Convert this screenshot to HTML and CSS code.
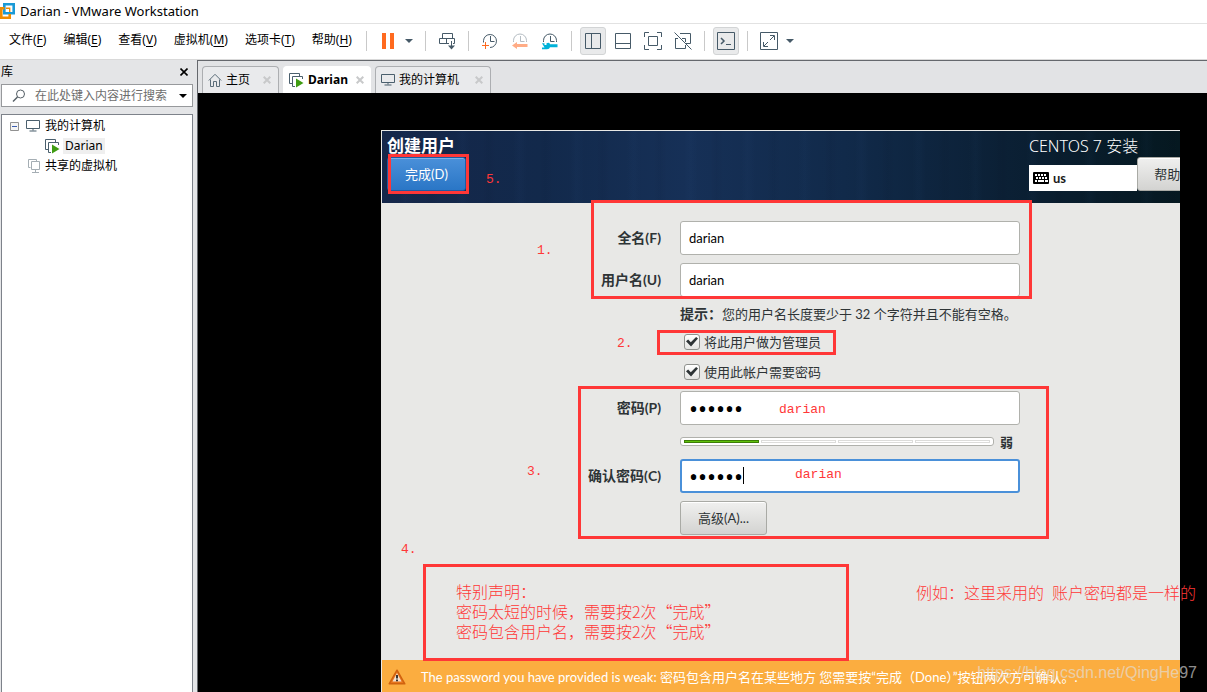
FILE: index.html
```
<!DOCTYPE html>
<html lang="zh-CN">
<head>
<meta charset="utf-8">
<title>Darian - VMware Workstation</title>
<link rel="stylesheet" href="styles.css">
</head>
<body>
<svg class="defs" aria-hidden="true">
  <symbol id="monitor" viewBox="0 0 14 12"><path d="M.5.5h13v8H.5zM7 8.500v2M3.500 11h7" fill="none" stroke="currentColor"/></symbol>
  <symbol id="vm-on" viewBox="0 0 15 15"><path d="M3 10.500H.5V.5h10V3M13.500 6V3.500h-10v10H6" fill="none" stroke="#4a5f6d"/><path d="M7 5.500l7.500 4.500L7 14.500z" fill="#3f9c12"/></symbol>
  <symbol id="caret" viewBox="0 0 8 4"><path d="M0 0h8L4 4z" fill="currentColor"/></symbol>
  <symbol id="close" viewBox="0 0 8 8"><path d="M.7.7l6.600 6.600M7.300.7L.7 7.300" fill="none" stroke="currentColor" stroke-width="2"/></symbol>
</svg>

<header class="titlebar">
  <svg class="logo" width="15" height="22" viewBox="0 0 15 22" fill="none"><path d="M4.300 4.300h9.400v9H4.300z" stroke="#1a9ad6" stroke-width="2.600"/><path d="M4.500 8.300H1.300v9.400h8.400V14" stroke="#f08c00" stroke-width="2.600"/><path d="M6 8.300h3.700V12" stroke="#f08c00" stroke-width="1.400"/></svg>
  <h1>Darian - VMware Workstation</h1>
</header>

<div class="menubar">
  <nav class="menus">
    <button>文件(<u>F</u>)</button>
    <button>编辑(<u>E</u>)</button>
    <button>查看(<u>V</u>)</button>
    <button>虚拟机(<u>M</u>)</button>
    <button>选项卡(<u>T</u>)</button>
    <button>帮助(<u>H</u>)</button>
  </nav>
  <div class="group power">
    <button aria-label="挂起"><svg width="14" height="16" viewBox="0 0 14 16"><path d="M1 0h4v16H1zM9 0h4v16H9z" fill="#ff6a1f"/></svg></button>
    <button aria-label="电源选项"><svg width="8" height="4"><use href="#caret"/></svg></button>
  </div>
  <div class="group send">
    <button aria-label="发送按键"><svg width="20" height="20" viewBox="0 0 20 20" fill="none" stroke="#465a68"><path d="M4.500 2.500h10v5h-10zM11 12.500H1.500v-5h15v5H15M8.500 7.500v5M13.500 10v6"/><path d="M10 14.500h7l-3.500 4z" fill="#465a68" stroke="none"/></svg></button>
  </div>
  <div class="group snap">
    <button aria-label="拍摄快照"><svg width="20" height="20" viewBox="0 0 20 20" fill="none" stroke="#465a68"><path d="M3.500 11.500v-2A6.500 6.500 0 1 1 10 16.500M10.500 5v5.500h4"/><path d="M2 14.500h7M5.500 11v7" stroke="#ff6a1f"/></svg></button>
    <button aria-label="恢复快照"><svg width="20" height="20" viewBox="0 0 20 20" fill="none" stroke="#b5bdc3"><path d="M3.500 11v-1.500a6.500 6.500 0 0 1 13 0V11M10.500 5v5.500h4"/><path d="M2 14.500L7 11v2h10.500v3H7v2z" fill="#ffac86" stroke="none"/></svg></button>
    <button aria-label="管理快照"><svg width="20" height="20" viewBox="0 0 20 20" fill="none" stroke="#465a68"><path d="M3.500 11v-1.500a6.500 6.500 0 0 1 13 0V11M10.500 5v5.500h4"/><path d="M2 12.200h2.500V14h2v-1.800q3-1 3.500 1h7.500v3H10q-.5 2-3 2H2v-1.600h2.500z" fill="#00b2d9" stroke="none"/></svg></button>
  </div>
  <div class="group view">
    <button class="pressed" aria-label="显示库"><svg width="18" height="18" viewBox="0 0 18 18" fill="none" stroke="#465a68"><path d="M1.500 1.500h15v15h-15zM7.500 1.500v15"/></svg></button>
    <button aria-label="缩略图栏"><svg width="18" height="18" viewBox="0 0 18 18" fill="none" stroke="#465a68"><path d="M1.500 1.500h15v15h-15zM1.500 11.500h15"/></svg></button>
    <button aria-label="全屏"><svg width="18" height="18" viewBox="0 0 18 18" fill="none" stroke="#465a68"><path d="M4.500 4.500h9v9h-9zM.5 5V.5H5M13 .5h4.500V5M17.500 13v4.500H13M5 17.500H.5V13"/></svg></button>
    <button aria-label="Unity"><svg width="18" height="18" viewBox="0 0 18 18" fill="none" stroke="#465a68"><path d="M6 1.500h10.500v10H12M1.500 6v10.500h10V13M1.500 6.500H4M11.500 10V6.500H8M.5.5l17 17"/></svg></button>
  </div>
  <div class="group console">
    <button class="pressed" aria-label="控制台"><svg width="18" height="18" viewBox="0 0 18 18" fill="none" stroke="#465a68"><path d="M.5.5h17v17H.5z"/><path d="M4 6l3 3-3 3" stroke-width="1.500"/><path d="M9 12.500h5"/></svg></button>
  </div>
  <div class="group stretch">
    <button aria-label="拉伸"><svg width="18" height="18" viewBox="0 0 18 18" fill="none" stroke="#465a68"><path d="M.5.5h17v17H.5zM10 3.500h4.500V8M8 14.500H3.500V10M14 4l-4 4M4 14l4-4"/></svg></button>
    <button aria-label="拉伸选项"><svg width="8" height="4"><use href="#caret"/></svg></button>
  </div>
</div>

<div class="workspace">
  <aside class="library">
    <div class="library-head"><h2>库</h2><button aria-label="关闭库"><svg width="8" height="8" viewBox="0 0 8 8"><path d="M.5.5l7 7M7.500.5l-7 7" stroke="#000" stroke-width="1.600"/></svg></button></div>
    <div class="search">
      <svg width="14" height="14" viewBox="0 0 14 14" fill="none" stroke="#555f66"><circle cx="8.500" cy="5" r="4"/><path d="M5.500 8L1 12.500" stroke-width="1.400"/></svg>
      <input type="text" aria-label="搜索" placeholder="在此处键入内容进行搜索">
      <button aria-label="搜索选项"><svg width="8" height="4"><use href="#caret"/></svg></button>
    </div>
    <ul class="tree">
      <li><svg class="expander" width="9" height="9" viewBox="0 0 9 9"><path d="M.5.5h8v8h-8z" fill="#f4f4f4" stroke="#919191"/><path d="M2 4.500h5" stroke="#3c5eb0"/></svg><svg class="ic-monitor" width="14" height="12"><use href="#monitor"/></svg><span>我的计算机</span></li>
      <li class="child"><svg width="15" height="15"><use href="#vm-on"/></svg><span class="selected">Darian</span></li>
      <li class="shared"><svg width="12" height="14" viewBox="0 0 12 14" fill="none" stroke="#a5aeb4"><path d="M2.500 8.500h-2v-8h8v2M3.500 2.500h8v8h-8zM7.500 10.500v3M4 13.500h7"/></svg><span>共享的虚拟机</span></li>
    </ul>
  </aside>

  <main class="main">
    <div class="tabs" role="tablist">
      <div class="tab" role="tab"><svg class="home" width="14" height="14" viewBox="0 0 14 14" fill="none" stroke="#5b6d79"><path d="M.8 7.500L7 1.300l6.200 6.200M2.500 6.500v7h3v-5h3v5h3v-7"/></svg><span>主页</span><button aria-label="关闭"><svg width="8" height="8"><use href="#close"/></svg></button></div>
      <div class="tab active" role="tab" aria-selected="true"><svg width="15" height="15"><use href="#vm-on"/></svg><span>Darian</span><button aria-label="关闭"><svg width="8" height="8"><use href="#close"/></svg></button></div>
      <div class="tab wide" role="tab"><svg class="ic-monitor" width="14" height="12"><use href="#monitor"/></svg><span>我的计算机</span><button aria-label="关闭"><svg width="8" height="8"><use href="#close"/></svg></button></div>
    </div>

    <div class="stage">
      <section class="guest">
        <header class="guest-head">
          <div class="head-left">
            <h2>创建用户</h2>
            <button class="done">完成(D)</button>
          </div>
          <div class="head-right">
            <p>CENTOS 7 安装</p>
            <div class="head-tools">
              <div class="keyboard"><svg width="16" height="12" viewBox="0 0 16 12"><rect width="16" height="12" rx="1" fill="#000"/><path d="M2 3h12" stroke="#fff" stroke-width="2" stroke-dasharray="2 1"/><path d="M3 6h11" stroke="#fff" stroke-width="2" stroke-dasharray="2 1"/><path d="M2 9h2M5 9h6M12 9h3" stroke="#fff" stroke-width="2"/></svg><span>us</span></div>
              <button class="btn help">帮助!</button>
            </div>
          </div>
        </header>
        <form class="form">
          <label for="full">全名(F)</label><input id="full" type="text" value="darian">
          <label for="user">用户名(U)</label><input id="user" type="text" value="darian">
          <p class="hint"><b>提示<span class="colon">：</span></b>您的用户名长度要少于 32 个字符并且不能有空格。</p>
          <label class="check"><input type="checkbox" checked><span>将此用户做为管理员</span></label>
          <label class="check"><input type="checkbox" checked><span>使用此帐户需要密码</span></label>
          <label for="pass">密码(P)</label><input id="pass" type="password" value="darian">
          <div class="strength"><div class="meter"><i class="on"></i><i></i><i></i><i></i></div><b>弱</b></div>
          <label for="confirm">确认密码(C)</label><div class="confirm"><input id="confirm" type="password" value="darian"><i class="cursor"></i></div>
          <button type="button" class="btn advanced">高级(A)...</button>
        </form>
        <footer class="warning">
          <svg width="18" height="16" viewBox="0 0 18 16"><path d="M9 1.200L16.800 14.800H1.200z" fill="#e8761c" stroke="#d0620f" stroke-width="1.500" stroke-linejoin="round"/><path d="M9 4l4.500 8.500h-9z" fill="#f5e2cf"/><path d="M9 6v3.500M9 10.500v1.800" stroke="#222" stroke-width="1.800"/></svg>
          <p>The password you have provided is weak: 密码包含用户名在某些地方 您需要按“完成（Done）”按钮两次方可确认。.</p>
        </footer>
      </section>

      <div class="notes">
        <div class="box box-done"></div>
        <div class="box box-names"></div>
        <div class="box box-admin"></div>
        <div class="box box-pass"></div>
        <div class="box box-notice"></div>
        <span class="note n1">1.</span>
        <span class="note n2">2.</span>
        <span class="note n3">3.</span>
        <span class="note n4">4.</span>
        <span class="note n5">5.</span>
        <span class="note pw1">darian</span>
        <span class="note pw2">darian</span>
        <p class="note notice">特别声明：<br>密码太短的时候，需要按2次“完成”<br>密码包含用户名，需要按2次“完成”</p>
        <p class="note example">例如：这里采用的&ensp;账户密码都是一样的</p>
        <span class="watermark">https://blog.csdn.net/QingHe97</span>
      </div>
    </div>
  </main>
</div>
</body>
</html>
```
FILE: styles.css
```
* { box-sizing: border-box; }
body {
  margin: 0;
  min-height: 100vh;
  display: flex;
  flex-direction: column;
  background: #fff;
  color: #000;
  font: 12px/16px "Noto Sans", "Noto Sans CJK SC", sans-serif;
  overflow: hidden;
}
h1, h2, p, ul { margin: 0; padding: 0; font: inherit; list-style: none; }
button { font: inherit; color: inherit; background: none; border: 0; padding: 0; margin: 0; display: flex; align-items: center; justify-content: center; }
svg { display: block; flex: none; }
.defs { position: absolute; width: 0; height: 0; }

.titlebar { height: 24px; display: flex; align-items: center; gap: 5px; padding-bottom: 1px; border-bottom: 1px solid #e2e2e2; }
.titlebar h1 { font-size: 13px; }

.menubar { height: 36px; display: flex; align-items: center; padding-bottom: 1px; border-bottom: 1px solid #d9d9d9; color: #000; }
.menus { display: flex; gap: 17px; padding: 0 14px 2px 9px; }
.menus button { white-space: nowrap; }
.menus u { text-underline-offset: 2px; }
.group { display: flex; align-items: center; height: 20px; border-left: 1px solid #c9c9c9; color: #465a68; }
.power { gap: 10px; padding: 0 12px 0 14px; }
.send { padding: 0 10px 0 12px; }
.snap { gap: 10px; padding: 0 11px; }
.view { gap: 4px; padding: 0 8px; }
.console { padding: 0 8px; }
.stretch { gap: 8px; padding: 0 12px; }
.view button, .console button { width: 26px; height: 28px; border-radius: 3px; }
.view .pressed, .console .pressed { background: #e9eaeb; border: 1px solid #d2d4d5; }

.workspace { flex: 1; display: flex; min-height: 0; }
.library { width: 197px; flex: none; display: flex; flex-direction: column; background: #e4e5e7; padding-right: 4px; }
.library-head { height: 24px; display: flex; align-items: center; justify-content: space-between; padding: 0 5px 0 1px; }
.search { height: 23px; margin: 0 0 7px 1px; border: 1px solid #97999c; background: #fff; display: flex; align-items: center; padding: 0 5px 0 10px; gap: 9px; }
.search input { flex: 1; min-width: 0; border: 0; padding: 0; font: inherit; background: none; }
.search input::placeholder { color: #6d6d6d; opacity: 1; }
.tree { flex: 1; margin-left: 1px; padding-top: 1px; background: #fff; border: 1px solid #7d828a; border-bottom: 0; }
.tree li { height: 20px; display: flex; align-items: center; padding-left: 8px; gap: 5px; }
.tree .expander { margin-right: 2px; }
.tree .child { padding-left: 43px; gap: 3px; }
.tree .shared { padding-left: 26px; gap: 5px; }
.ic-monitor { color: #4a5f6d; }
.selected { background: #efefef; padding: 0 2px; }

.main { flex: 1; min-width: 0; display: flex; flex-direction: column; border-left: 1px solid #65686d; border-top: 1px solid #65686d; }
.tabs { height: 32px; flex: none; display: flex; align-items: flex-end; gap: 4px; padding-left: 4px; background: #e2e3e5; }
.tab { height: 27px; display: flex; align-items: center; gap: 4px; padding: 0 7px 0 5px; border: 1px solid #acaeb1; border-bottom: 0; border-radius: 4px 4px 0 0; background: #e9eaec; }
.tab button { color: #c8c9ca; margin-left: 9px; }
.tab.wide button { margin-left: 12px; }
.tab.active { background: #fff; border-color: #fff; font-weight: bold; padding-right: 6px; }
.tab.active button { margin-left: 4px; }

.stage { flex: 1; position: relative; display: flex; background: #000; padding: 37px 27px 0 183px; min-height: 0; }
.guest { flex: 1; min-width: 0; display: flex; flex-direction: column; overflow: hidden; background: #e8e8e6; border: 1px solid #e8e8e6; border-width: 1px 0 0 1px; color: #2e3436; font: 13px/18px Lato, "Noto Sans CJK SC", sans-serif; }
.guest-head {
  height: 72px;
  flex: none;
  display: flex;
  justify-content: space-between;
  background:
    repeating-linear-gradient(90deg, transparent 0 17px, rgba(70, 120, 190, .03) 23px 24px, transparent 31px 43px, rgba(0, 0, 20, .04) 49px 50px, transparent 57px),
    linear-gradient(90deg, #15274a 0%, #12294b 20%, #163057 38%, #112a4a 58%, #0b2035 78%, #051820 100%);
  color: #fff;
}
.head-left { padding: 6px 6px 6px 5px; }
.head-left h2 { font-size: 17px; font-weight: bold; line-height: 18px; margin-bottom: 2px; }
.done { width: 79px; height: 34px; border: 1px solid #1d5ba3; border-radius: 3px; background: linear-gradient(#4a90d9, #2a76c6); box-shadow: inset 0 1px #7eb0e5; }
.head-right { width: 151px; flex: none; padding-top: 6px; }
.head-right p { font-family: "Noto Sans", "Noto Sans CJK SC", sans-serif; font-size: 16px; font-weight: 300; }
.head-tools { display: flex; align-items: center; padding-top: 2px; }
.keyboard { width: 108px; height: 26px; flex: none; display: flex; align-items: center; gap: 4px; padding-left: 4px; margin-top: 8px; background: #fff; color: #1a1a1a; font-weight: bold; }
.btn { border: 1px solid #a9aaa5; border-radius: 3px; background: linear-gradient(#f0f0ef, #d3d3d1); color: #2e3436; box-shadow: inset 0 1px #fff; height: 34px; }
.help { width: 64px; flex: none; }

.form { flex: 1; display: grid; grid-template-columns: 279px minmax(0, 340px); column-gap: 19px; align-content: start; padding-top: 18px; }
.form > label[for] { justify-self: end; align-self: center; font-size: 14px; font-weight: bold; }
.form input[type=text], .form input[type=password] { width: 100%; height: 34px; border: 1px solid #b0b1ac; border-radius: 3px; background: #fff; color: #000; font: inherit; padding: 0 8px; }
.form label[for=full], #full { margin-bottom: 8px; }
.form label[for=pass], #pass { margin-bottom: 12px; }
.hint, .check, .strength, .advanced { grid-column: 2; }
.hint { white-space: nowrap; padding: 7px 0 5px; }
.hint b { font-size: 14px; }
.colon { font-family: "Noto Sans CJK TC", sans-serif; }
.check { display: flex; align-items: center; gap: 4px; height: 30px; padding-left: 4px; margin-top: -1px; }
.check + .check { margin: 0 0 4px; }
.check input { appearance: none; width: 16px; height: 16px; margin: 0; border: 1px solid #8f918d; border-radius: 3px; background: linear-gradient(#fff, #e4e4e2); display: grid; place-content: center; }
.check input:checked::before { content: ""; width: 12px; height: 10px; background: #2e3436; clip-path: polygon(0 42%, 18% 26%, 40% 52%, 84% 0, 100% 16%, 42% 96%); }
.form #pass, .form #confirm { font-family: "Noto Sans", sans-serif; font-size: 24px; }
.strength { display: flex; align-items: center; gap: 6px; height: 9px; margin-bottom: 13px; white-space: nowrap; }
.meter { width: 314px; height: 9px; display: flex; gap: 2px; padding: 2px 3px; border: 1px solid #b0b1ac; border-radius: 3px; background: #fff; }
.meter i { flex: 1; border: 1px solid #dcdcda; }
.meter .on { background: #5fc20c; border-color: #3b7d06; }
.confirm { position: relative; display: flex; margin-bottom: 8px; }
.form label[for=confirm] { margin-bottom: 8px; }
.form #confirm { border: 2px solid #4a90d9; padding: 0 7px; }
.cursor { position: absolute; left: 63px; top: 8px; width: 1px; height: 17px; background: #000; }
.advanced { width: 87px; }
.warning { height: 32px; flex: none; display: flex; align-items: center; gap: 15px; padding-left: 6px; padding-top: 2px; background: #fbad40; color: #fff; white-space: nowrap; }

/* Red mark-up lying over the guest screen */
.notes { position: absolute; inset: 0; pointer-events: none; color: #ff3737; font: 16px/20px "Liberation Mono", "Noto Sans CJK SC", monospace; }
.box { position: absolute; border: 3px solid #ff3737; }
.box-done { left: 190px; top: 61px; width: 81px; height: 40px; }
.box-names { left: 393px; top: 107px; width: 441px; height: 99px; }
.box-admin { left: 459px; top: 237px; width: 179px; height: 25px; }
.box-pass { left: 380px; top: 293px; width: 471px; height: 153px; }
.box-notice { left: 225px; top: 471px; width: 426px; height: 97px; }
.note { position: absolute; white-space: nowrap; }
span.note { font-size: 13px; }
.n1 { left: 339px; top: 148px; }
.n2 { left: 419px; top: 241px; }
.n3 { left: 329px; top: 369px; }
.n4 { left: 203px; top: 447px; }
.n5 { left: 288px; top: 77px; }
.pw1 { left: 581px; top: 307px; }
.pw2 { left: 597px; top: 372px; }
.notice, .example { font-family: "Noto Sans CJK SC", sans-serif; font-weight: 300; }
.notice { left: 258px; top: 488px; }
.example { left: 718px; top: 489px; }
.watermark { position: absolute; right: 10px; bottom: 9px; font: 16px/20px "Liberation Sans", sans-serif; color: rgba(225, 225, 225, .65); }
```
